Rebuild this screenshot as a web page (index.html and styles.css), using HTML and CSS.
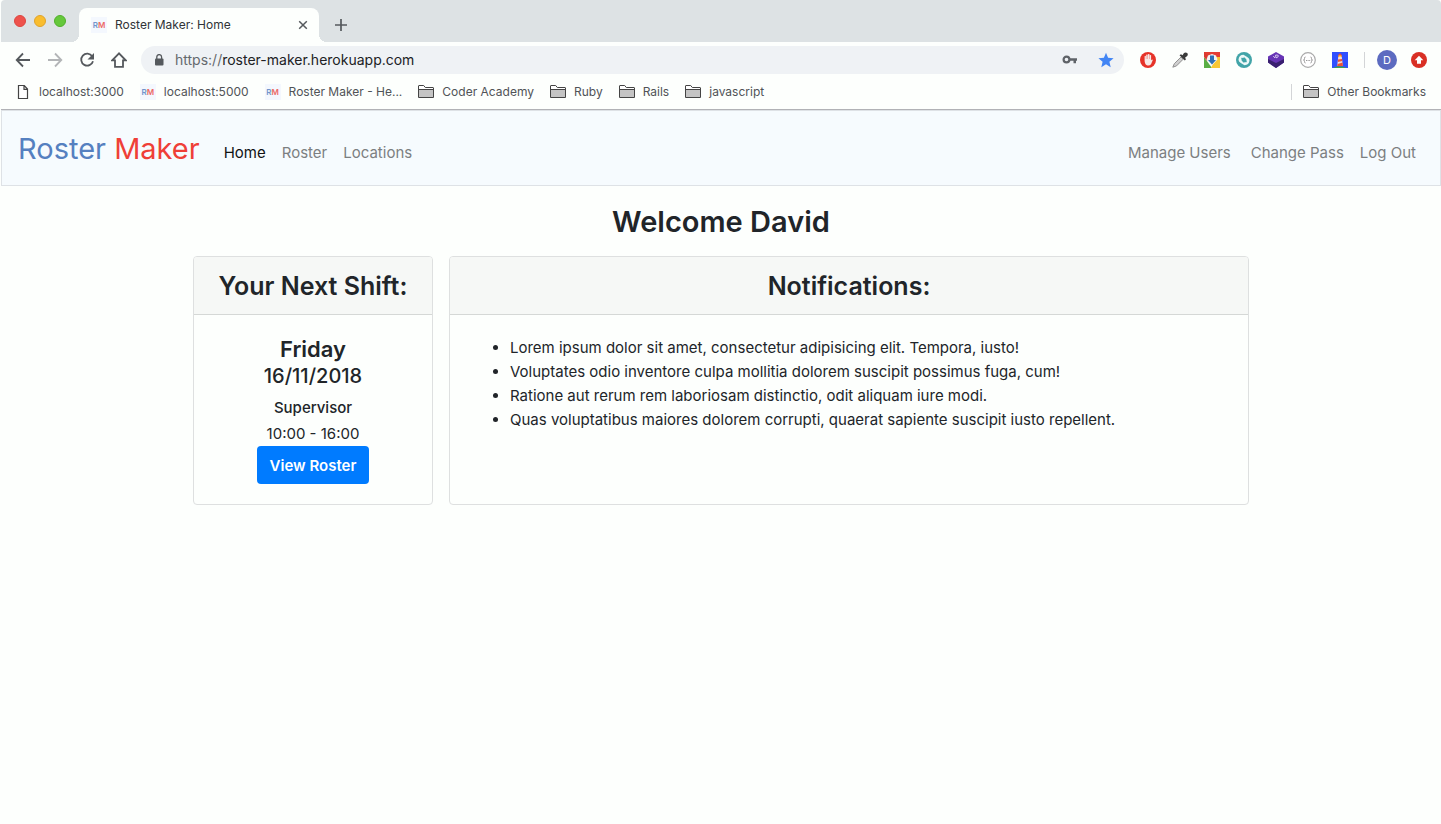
FILE: index.html
```html
<!DOCTYPE html>
<html lang="en">
<head>
<meta charset="utf-8">
<title>Roster Maker: Home</title>
<link rel="stylesheet" href="styles.css">
</head>
<body>
<svg class="defs" aria-hidden="true">
  <symbol id="folder" viewBox="0 0 16 14"><path d="M.5 12.5v-12h5.200l1.600 2h8.200v10z" fill="#fff"/><path d="M1 5h14v7.500H1z" fill="#c4c4c4"/><path d="M.5 12.500v-11.500q0-.500.500-.500h4.700l1.600 2h7.700q.500 0 .500.500v9.500zM.5 4.500h15" fill="none" stroke="#444"/></symbol>
</svg>
<header class="browser">
  <div class="tabstrip">
    <div class="lights"><i class="light red"></i><i class="light yellow"></i><i class="light green"></i></div>
    <div class="tab">
      <span class="favicon"><b class="fr">R</b><b class="fm">M</b></span>
      <span class="tab-title">Roster Maker: Home</span>
      <button class="icon-btn" aria-label="Close tab"><svg width="10" height="10" viewBox="0 0 10 10"><path d="M1.200 1.200l7.600 7.600M8.800 1.200L1.200 8.800" stroke="#55595d" stroke-width="1.500"/></svg></button>
    </div>
    <button class="icon-btn new-tab" aria-label="New tab"><svg width="12" height="12" viewBox="0 0 12 12"><path d="M6 0v12M0 6h12" stroke="#55595d" stroke-width="1.700"/></svg></button>
  </div>
  <div class="toolbar">
    <button class="icon-btn" aria-label="Back"><svg width="16" height="16" viewBox="0 0 16 16"><path d="M8 1.500L1.700 8 8 14.500M2 8h13" fill="none" stroke="#55595d" stroke-width="1.800"/></svg></button>
    <button class="icon-btn" aria-label="Forward"><svg width="16" height="16" viewBox="0 0 16 16"><path d="M8 1.500L14.300 8 8 14.500M14 8H1" fill="none" stroke="#b3b5b7" stroke-width="1.800"/></svg></button>
    <button class="icon-btn" aria-label="Reload"><svg width="16" height="16" viewBox="0 0 16 16"><path d="M13.200 4.300A6 6 0 1 0 14 9.300" fill="none" stroke="#55595d" stroke-width="1.800"/><path d="M15 1v6.500H8.500z" fill="#55595d"/></svg></button>
    <button class="icon-btn" aria-label="Home page"><svg width="16" height="16" viewBox="0 0 16 16"><path d="M8 1.300L1.300 8.300H4v6.500h8V8.300h2.700z" fill="none" stroke="#55595d" stroke-width="1.800"/></svg></button>
    <div class="omnibox">
      <svg class="lock" width="10" height="12" viewBox="0 0 10 12"><rect x="1" y="4.500" width="8.500" height="7" rx="1" fill="#55595d"/><path d="M2.800 5V3a2.400 2.400 0 0 1 4.800 0v2" fill="none" stroke="#55595d" stroke-width="1.300"/></svg>
      <label class="scheme" for="url">https://</label><input id="url" class="url" value="roster-maker.herokuapp.com">
      <button class="icon-btn" aria-label="Passwords"><svg width="16" height="12" viewBox="0 0 16 12"><circle cx="4.500" cy="5.500" r="2.900" fill="none" stroke="#5f6368" stroke-width="2.200"/><path d="M8 4.300h7v2.500h-1v2.500h-2.500V6.800H8z" fill="#5f6368"/></svg></button>
      <button class="icon-btn star" aria-label="Bookmark"><svg width="16" height="16" viewBox="0 0 16 16"><path d="M8 .7l2.100 5.100 5.500.4-4.200 3.600 1.300 5.400L8 12.300l-4.700 2.900 1.300-5.400L.4 6.200l5.500-.4z" fill="#4285f4"/></svg></button>
    </div>
    <div class="extensions">
      <button class="icon-btn" aria-label="Blocker"><svg width="16" height="16" viewBox="0 0 16 16"><circle cx="8" cy="8" r="8" fill="#e63329"/><path d="M4.600 9V4.200q.7-.8 1.300 0V7h.3V2.800q.8-.8 1.500 0V7H8V2.300q.8-.8 1.500 0V7h.3V3.300q.7-.7 1.300 0v4.900l1-.8q.8-.1.600.8L11 12.300Q9.500 14 7.500 13.500 5 13 4.600 9z" fill="#f7e9e7"/></svg></button>
      <button class="icon-btn" aria-label="Colour picker"><svg width="16" height="16" viewBox="0 0 16 16"><path d="M9 5L2.300 11.700.8 15.200l3.700-1.300L11.200 7.200z" fill="#cfcfcf" stroke="#888" stroke-width=".9"/><path d="M7.500 3.200L9 2.300l1.500 1L12 1q1.600-1.200 3.200 0 1.200 1.600 0 3L13 5.800l1 1.400-1.200 1.300z" fill="#3a3a3a"/></svg></button>
      <button class="icon-btn" aria-label="Downloader"><svg width="16" height="16" viewBox="0 0 16 16"><path d="M0 0h16v5H0z" fill="#e43d33"/><path d="M0 5l8 11H0z" fill="#5aae45"/><path d="M0 0v5l3 4 2-4z" fill="#d93a30"/><path d="M16 5v11H7l5-11z" fill="#f8c735"/><path d="M4 3.500L8 2l4 1.500 1.500 4L8 13.500 2.500 7.500z" fill="#f0f2f4"/><path d="M6 3.500h4V8h2l-4 4.500L4 8h2z" fill="#2d6fb4"/></svg></button>
      <button class="icon-btn" aria-label="Sync"><svg width="16" height="16" viewBox="0 0 16 16"><circle cx="8" cy="8" r="8" fill="#42a4a8"/><path d="M2.500 7.500Q3 3 7.500 2.800L12 5.500H8Q5.500 5.500 5.300 8l2 2.500Q3 11.500 2.500 7.500zM13.500 8.500Q13 13 8.500 13.200L4 10.500h4q2.500 0 2.700-2.500l-2-2.500q4.300-1 4.800 3z" fill="#edf8f8"/><path d="M5.500 6l5 4" stroke="#42a4a8" stroke-width="1.400"/></svg></button>
      <button class="icon-btn" aria-label="Cube"><svg width="16" height="16" viewBox="0 0 16 16"><path d="M8 0l8 4.500v6L8 16 0 10.500v-6z" fill="#6734b5"/><path d="M0 7l8 4 8-4v3.500L8 16 0 10.500z" fill="#39206f"/><path d="M5.300 4l1.700 2M7.500 3.200q3-.8 2.800.8T8 5.800z" fill="none" stroke="#d8c8f2"/></svg></button>
      <button class="icon-btn" aria-label="JSON viewer"><svg width="16" height="16" viewBox="0 0 16 16"><circle cx="8" cy="8" r="7.300" fill="#fff" stroke="#aaa" stroke-width="1.200"/><path d="M5.500 5Q4.300 5 4.500 6.500T3.500 8q1 0 1 1.500T5.500 11M10.500 5q1.200 0 1 1.500t1 1.500q-1 0-1 1.500t-1 1.500M6 8.500h1M7.600 8.500h1M9.200 8.500h1" fill="none" stroke="#999"/></svg></button>
      <button class="icon-btn" aria-label="Lighthouse"><svg width="16" height="16" viewBox="0 0 16 16"><path d="M0 0h16v16H0z" fill="#304ffe"/><path d="M1 16q6-3.500 14 0z" fill="#43a047"/><path d="M6.200 5h3.600l1 9H5.200z" fill="#f4dbd0"/><path d="M6.200 5h3.600V3L8 1.200 6.200 3zM6 7.500l4-.5.300 2-4.500 1zM5.600 12l5-1.500.3 3.500H5.200z" fill="#ec5037"/><path d="M6.500 3.500h3V5h-3z" fill="#ffd54f"/></svg></button>
    </div>
    <i class="divider"></i>
    <button class="avatar">D</button>
    <button class="icon-btn" aria-label="Update"><svg width="16" height="16" viewBox="0 0 16 16"><circle cx="8" cy="8" r="8" fill="#d93025"/><path d="M8 3.800L12.300 8.300H10v3.500H6V8.300H3.700z" fill="#fff"/></svg></button>
  </div>
  <nav class="bookmarks" aria-label="Bookmarks">
    <a href="#"><svg width="16" height="14" viewBox="0 0 16 14"><path d="M3.500.5h5.700l3.300 3.500v9.500h-9zM9 .5V4.300h3.500" fill="#fff" stroke="#444" stroke-width="1.200"/></svg>localhost:3000</a>
    <a href="#"><span class="favicon"><b class="fr">R</b><b class="fm">M</b></span>localhost:5000</a>
    <a href="#"><span class="favicon"><b class="fr">R</b><b class="fm">M</b></span>Roster Maker - He...</a>
    <a href="#"><svg width="16" height="14"><use href="#folder"/></svg>Coder Academy</a>
    <a href="#"><svg width="16" height="14"><use href="#folder"/></svg>Ruby</a>
    <a href="#"><svg width="16" height="14"><use href="#folder"/></svg>Rails</a>
    <a href="#"><svg width="16" height="14"><use href="#folder"/></svg>javascript</a>
    <a href="#" class="other"><svg width="16" height="14"><use href="#folder"/></svg>Other Bookmarks</a>
  </nav>
</header>
<nav class="navbar" aria-label="Main">
  <a href="#" class="brand"><span class="brand-a">Roster</span> <span class="brand-b">Maker</span></a>
  <a href="#" class="active">Home</a>
  <a href="#">Roster</a>
  <a href="#">Locations</a>
  <a href="#" class="manage">Manage Users</a>
  <a href="#">Change Pass</a>
  <a href="#">Log Out</a>
</nav>
<main>
  <h1>Welcome David</h1>
  <div class="cards">
    <section class="card shift">
      <h2>Your Next Shift:</h2>
      <div class="card-body">
        <h3>Friday</h3>
        <h4>16/11/2018</h4>
        <p class="role">Supervisor</p>
        <p>10:00 - 16:00</p>
        <button class="primary">View Roster</button>
      </div>
    </section>
    <section class="card notes">
      <h2>Notifications:</h2>
      <ul>
        <li>Lorem ipsum dolor sit amet, consectetur adipisicing elit. Tempora, iusto!</li>
        <li>Voluptates odio inventore culpa mollitia dolorem suscipit possimus fuga, cum!</li>
        <li>Ratione aut rerum rem laboriosam distinctio, odit aliquam iure modi.</li>
        <li>Quas voluptatibus maiores dolorem corrupti, quaerat sapiente suscipit iusto repellent.</li>
      </ul>
    </section>
  </div>
</main>
</body>
</html>
```

FILE: styles.css
```css
* { box-sizing: border-box; }
body { margin: 0; padding-left: 1px; background: #fdfffd; color: #212529; font: 15px/24px Inter, "Liberation Sans", sans-serif; }
a { color: inherit; text-decoration: none; }
button { font-family: inherit; border: 0; cursor: pointer; }
h1, h2, h3, h4, p, ul { margin: 0; }
svg { display: block; flex: none; }
.defs { position: absolute; width: 0; height: 0; }
.icon-btn { display: flex; align-items: center; justify-content: center; padding: 0; background: none; }

.browser { border-bottom: 1px solid #b1b2b6; color: #505357; }
.tabstrip { display: flex; align-items: flex-end; height: 42px; background: #dde2e4; border-radius: 4px 4px 0 0; }
.lights { display: flex; gap: 8px; padding: 0 13px 15px; width: 78px; }
.light { width: 12px; height: 12px; border-radius: 50%; }
.red { background: #ee524c; border: 1px solid #dd4640; }
.yellow { background: #f9bd2e; border: 1px solid #e0a32b; }
.green { background: #65c83b; border: 1px solid #51b02b; }
.tab { position: relative; display: flex; align-items: center; gap: 8px; width: 240px; height: 34px; padding: 0 11px 0 12px; background: #fdfffd; border-radius: 8px 8px 0 0; color: #303337; font-size: 12px; }
.tab::before, .tab::after { content: ""; position: absolute; bottom: 0; width: 8px; height: 8px; }
.tab::before { right: 100%; background: radial-gradient(circle at 0 0, transparent 8px, #fdfffd 8px); }
.tab::after { left: 100%; background: radial-gradient(circle at 100% 0, transparent 8px, #fdfffd 8px); }
.tab-title { flex: 1; }
.new-tab { padding: 0 16px 11px; }
.favicon { display: flex; align-items: center; justify-content: center; width: 16px; height: 16px; background: #f4f8fe; font-size: 8px; line-height: 16px; }
.favicon b { font-weight: 600; }
.fr { color: #7295cb; }
.fm { color: #ec6a67; }
.toolbar { display: flex; align-items: center; height: 36px; padding: 0 14px; gap: 16px; }
.omnibox { display: flex; align-items: center; flex: 1; height: 28px; margin-left: -2px; padding: 0 10px 0 13px; background: #eff2f5; border-radius: 14px; font-size: 14px; }
.lock { margin-right: 11px; }
.scheme { color: #65696d; }
.url { flex: 1; min-width: 0; padding: 0; border: 0; outline: 0; background: none; color: #202124; font: inherit; }
.star { margin-left: 20px; }
.extensions { display: flex; gap: 16px; }
.divider { width: 1px; height: 16px; background: #d3d5d7; }
.avatar { width: 20px; height: 20px; margin: 0 -2px 0 -4px; padding: 0; border-radius: 50%; background: #5c6bc0; color: #fff; font-size: 11px; }
.bookmarks { display: flex; align-items: center; height: 31px; padding: 0 15px 3px 14px; gap: 16px; font-size: 12px; line-height: 16px; }
.bookmarks a { display: flex; align-items: center; gap: 8px; }
.bookmarks .other { margin-left: auto; padding-left: 11px; border-left: 1px solid #d3d5d7; }

.navbar { display: flex; align-items: center; height: 76px; padding: 0 24px 0 16px; gap: 16px; border: 1px solid #dee2e6; background: #f6fbfe; color: #7c7f81; }
.navbar > a { padding-top: 10px; }
.navbar > .brand { padding: 2px 0 0; margin-right: 8px; font-size: 29px; line-height: 48px; }
.brand-a { color: #5580c0; }
.brand-b { color: #ef3f38; }
.navbar .active { color: #101214; }
.manage { margin: 0 4px 0 auto; }

h1, h2, h3, h4 { font-weight: 600; text-align: center; }
main { max-width: 1088px; margin: 0 auto; padding: 16px; }
h1 { font-size: 29px; line-height: 40px; margin-bottom: 14px; }
.cards { display: flex; gap: 16px; }
.card { border: 1px solid #dee0e0; border-radius: 4px; overflow: hidden; }
.card h2 { padding: 13px 12px 11px; background: #f6f8f6; border-bottom: 1px solid #d5d8d6; font-size: 25px; line-height: 33px; }
.shift { flex: 0 0 240px; }
.notes { flex: 1; }
.card-body { padding: 20px; text-align: center; }
h3 { font-size: 22px; line-height: 29px; }
h4 { font-size: 20px; line-height: 24px; margin-bottom: 8px; font-weight: 500; }
.role { font-weight: 500; margin-bottom: 2px; }
.primary { height: 38px; padding: 0 13px; border-radius: 4px; background: #007bff; color: #fff; font-size: 15px; font-weight: 600; }
.notes ul { padding: 21px 20px 20px 60px; }
```
